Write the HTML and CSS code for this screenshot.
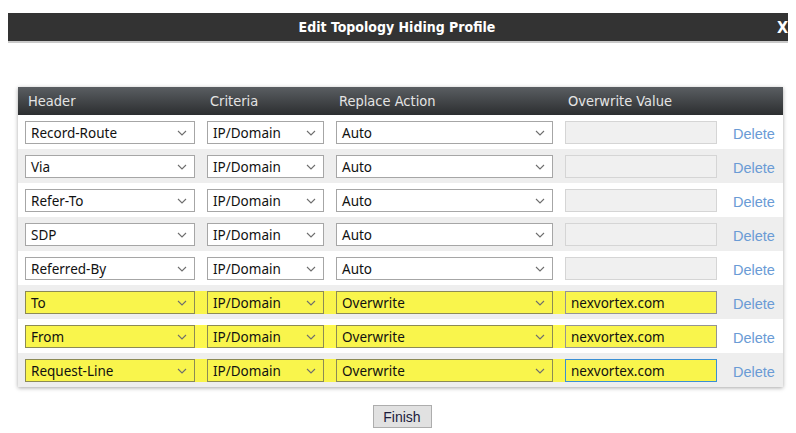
FILE: index.html
```html
<!DOCTYPE html>
<html>
<head>
<meta charset="utf-8">
<link rel="stylesheet" href="styles.css">
</head>
<body>
<div class="titlebar">
  <span class="title">Edit Topology Hiding Profile</span>
  <span class="close">X</span>
</div>
<div class="wrap">
<table class="grid">
  <thead>
    <tr><th class="c1">Header</th><th class="c2">Criteria</th><th class="c3">Replace Action</th><th class="c4">Overwrite Value</th><th class="c5"></th></tr>
  </thead>
  <tbody>
    <tr>
      <td class="c1"><div class="sel w1"><span>Record-Route</span><svg class="chev" viewBox="0 0 10 6"><path d="M1 1l4 4 4-4"/></svg></div></td>
      <td class="c2"><div class="sel w2"><span>IP/Domain</span><svg class="chev" viewBox="0 0 10 6"><path d="M1 1l4 4 4-4"/></svg></div></td>
      <td class="c3"><div class="sel w3"><span>Auto</span><svg class="chev" viewBox="0 0 10 6"><path d="M1 1l4 4 4-4"/></svg></div></td>
      <td class="c4"><div class="inp"></div></td>
      <td class="c5"><a class="del">Delete</a></td>
    </tr>
    <tr>
      <td class="c1"><div class="sel w1"><span>Via</span><svg class="chev" viewBox="0 0 10 6"><path d="M1 1l4 4 4-4"/></svg></div></td>
      <td class="c2"><div class="sel w2"><span>IP/Domain</span><svg class="chev" viewBox="0 0 10 6"><path d="M1 1l4 4 4-4"/></svg></div></td>
      <td class="c3"><div class="sel w3"><span>Auto</span><svg class="chev" viewBox="0 0 10 6"><path d="M1 1l4 4 4-4"/></svg></div></td>
      <td class="c4"><div class="inp"></div></td>
      <td class="c5"><a class="del">Delete</a></td>
    </tr>
    <tr>
      <td class="c1"><div class="sel w1"><span>Refer-To</span><svg class="chev" viewBox="0 0 10 6"><path d="M1 1l4 4 4-4"/></svg></div></td>
      <td class="c2"><div class="sel w2"><span>IP/Domain</span><svg class="chev" viewBox="0 0 10 6"><path d="M1 1l4 4 4-4"/></svg></div></td>
      <td class="c3"><div class="sel w3"><span>Auto</span><svg class="chev" viewBox="0 0 10 6"><path d="M1 1l4 4 4-4"/></svg></div></td>
      <td class="c4"><div class="inp"></div></td>
      <td class="c5"><a class="del">Delete</a></td>
    </tr>
    <tr>
      <td class="c1"><div class="sel w1"><span>SDP</span><svg class="chev" viewBox="0 0 10 6"><path d="M1 1l4 4 4-4"/></svg></div></td>
      <td class="c2"><div class="sel w2"><span>IP/Domain</span><svg class="chev" viewBox="0 0 10 6"><path d="M1 1l4 4 4-4"/></svg></div></td>
      <td class="c3"><div class="sel w3"><span>Auto</span><svg class="chev" viewBox="0 0 10 6"><path d="M1 1l4 4 4-4"/></svg></div></td>
      <td class="c4"><div class="inp"></div></td>
      <td class="c5"><a class="del">Delete</a></td>
    </tr>
    <tr>
      <td class="c1"><div class="sel w1"><span>Referred-By</span><svg class="chev" viewBox="0 0 10 6"><path d="M1 1l4 4 4-4"/></svg></div></td>
      <td class="c2"><div class="sel w2"><span>IP/Domain</span><svg class="chev" viewBox="0 0 10 6"><path d="M1 1l4 4 4-4"/></svg></div></td>
      <td class="c3"><div class="sel w3"><span>Auto</span><svg class="chev" viewBox="0 0 10 6"><path d="M1 1l4 4 4-4"/></svg></div></td>
      <td class="c4"><div class="inp"></div></td>
      <td class="c5"><a class="del">Delete</a></td>
    </tr>
    <tr class="hl">
      <td class="c1"><div class="sel w1"><span>To</span><svg class="chev" viewBox="0 0 10 6"><path d="M1 1l4 4 4-4"/></svg></div></td>
      <td class="c2"><div class="sel w2"><span>IP/Domain</span><svg class="chev" viewBox="0 0 10 6"><path d="M1 1l4 4 4-4"/></svg></div></td>
      <td class="c3"><div class="sel w3"><span>Overwrite</span><svg class="chev" viewBox="0 0 10 6"><path d="M1 1l4 4 4-4"/></svg></div></td>
      <td class="c4"><div class="inp"><span>nexvortex.com</span></div></td>
      <td class="c5"><a class="del">Delete</a></td>
    </tr>
    <tr class="hl">
      <td class="c1"><div class="sel w1"><span>From</span><svg class="chev" viewBox="0 0 10 6"><path d="M1 1l4 4 4-4"/></svg></div></td>
      <td class="c2"><div class="sel w2"><span>IP/Domain</span><svg class="chev" viewBox="0 0 10 6"><path d="M1 1l4 4 4-4"/></svg></div></td>
      <td class="c3"><div class="sel w3"><span>Overwrite</span><svg class="chev" viewBox="0 0 10 6"><path d="M1 1l4 4 4-4"/></svg></div></td>
      <td class="c4"><div class="inp"><span>nexvortex.com</span></div></td>
      <td class="c5"><a class="del">Delete</a></td>
    </tr>
    <tr class="hl">
      <td class="c1"><div class="sel w1"><span>Request-Line</span><svg class="chev" viewBox="0 0 10 6"><path d="M1 1l4 4 4-4"/></svg></div></td>
      <td class="c2"><div class="sel w2"><span>IP/Domain</span><svg class="chev" viewBox="0 0 10 6"><path d="M1 1l4 4 4-4"/></svg></div></td>
      <td class="c3"><div class="sel w3"><span>Overwrite</span><svg class="chev" viewBox="0 0 10 6"><path d="M1 1l4 4 4-4"/></svg></div></td>
      <td class="c4"><div class="inp focus"><span>nexvortex.com</span></div></td>
      <td class="c5"><a class="del">Delete</a></td>
    </tr>
  </tbody>
</table>
</div>
<div class="actions"><button class="finish">Finish</button></div>
</body>
</html>
```

FILE: styles.css
```css
html, body {
  margin: 0;
  padding: 0;
  background: #ffffff;
}
body {
  width: 796px;
  height: 433px;
  overflow: hidden;
  font-family: "Noto Sans", "DejaVu Sans", sans-serif;
}
.titlebar {
  margin: 13px 0 0 8px;
  width: 780px;
  height: 28px;
  background: #333333;
  border-bottom: 2px solid #c9c9c9;
  display: flex;
  align-items: center;
  justify-content: center;
  position: relative;
  color: #ffffff;
}
.title {
  font-family: "Liberation Sans Narrow", "DejaVu Sans Condensed", "Roboto", sans-serif;
  font-weight: bold;
  font-size: 14px;
  margin-left: -2px;
}
.close {
  position: absolute;
  right: 0;
  top: 5px;
  font-family: "Liberation Sans Narrow", "DejaVu Sans Condensed", sans-serif;
  font-weight: bold;
  font-size: 16px;
}
.wrap {
  margin: 44px 0 0 18px;
  width: 765px;
  box-shadow: 0 1px 4px rgba(0,0,0,0.35);
}
.grid {
  width: 765px;
  border-collapse: collapse;
  table-layout: fixed;
}
.grid th {
  height: 28px;
  padding: 0 0 0 9px;
  text-align: left;
  font-family: "Liberation Sans Narrow", "DejaVu Sans Condensed", sans-serif;
  font-weight: normal;
  font-size: 14.5px;
  color: #e4e4e4;
  background: linear-gradient(#5a5e62, #2c2e30);
}
.grid th.c1 { padding-left: 10px; width: 173px; }
.grid th.c2 { width: 120px; }
.grid th.c3 { width: 220px; }
.grid th.c4 { width: 155px; }
.grid th.c5 { width: 51px; }
.grid td {
  padding: 6px 6px 5px 6px;
  height: 23px;
}
.grid td.c1 { padding-left: 7px; }
.grid td.c5 { padding-left: 10px; padding-right: 0; }
.grid tbody tr:nth-child(even) td { background-color: #eeeeee; }
.grid tbody tr:nth-child(odd) td { background-color: #ffffff; }

.grid tr.hl td {
  background-image: linear-gradient(rgba(252, 246, 40, 0.82), rgba(252, 246, 40, 0.82));
  background-repeat: no-repeat;
  background-size: 100% 23px;
  background-position: 0 6px;
}
.grid tr.hl td.c1 {
  background-size: calc(100% - 7px) 23px;
  background-position: 7px 6px;
}
.grid tr.hl td.c4 {
  background-size: calc(100% - 6px) 23px;
}
.grid tr.hl td.c5 { background-image: none; }

.sel {
  box-sizing: border-box;
  height: 23px;
  border: 1px solid #a6a6a6;
  background: #ffffff;
  display: flex;
  align-items: center;
  justify-content: space-between;
  padding: 0 7px 0 5px;
  font-size: 13.5px;
  color: #111;
}
.w1 { width: 170px; }
.w2 { width: 117px; }
.w3 { width: 217px; }
.chev {
  width: 10px;
  height: 6px;
  fill: none;
  stroke: #6e6e6e;
  stroke-width: 1.1;
}
.hl .sel {
  background: #f9f54c;
  border-color: #8c8a55;
}
.inp {
  box-sizing: border-box;
  width: 152px;
  height: 23px;
  border: 1px solid #d5d5d5;
  background: #f0f0f0;
  display: flex;
  align-items: center;
  padding: 0 5px;
  font-size: 13.5px;
  color: #111;
}
.hl .inp {
  background: #f9f54c;
  border-color: #949494;
}
.hl .inp.focus {
  border-color: #3b8fd4;
}
.del {
  font-family: "Liberation Sans", Arial, sans-serif;
  font-size: 14.5px;
  color: #6a9bd5;
}
.actions {
  display: flex;
  justify-content: center;
  margin-top: 18px;
  padding-left: 8px;
}
.finish {
  width: 59px;
  height: 23px;
  padding: 0;
  border: 1px solid #adadad;
  background: #e1e1e1;
  font-family: "Liberation Sans", Arial, sans-serif;
  font-size: 14px;
  color: #1c1c3c;
}
```
